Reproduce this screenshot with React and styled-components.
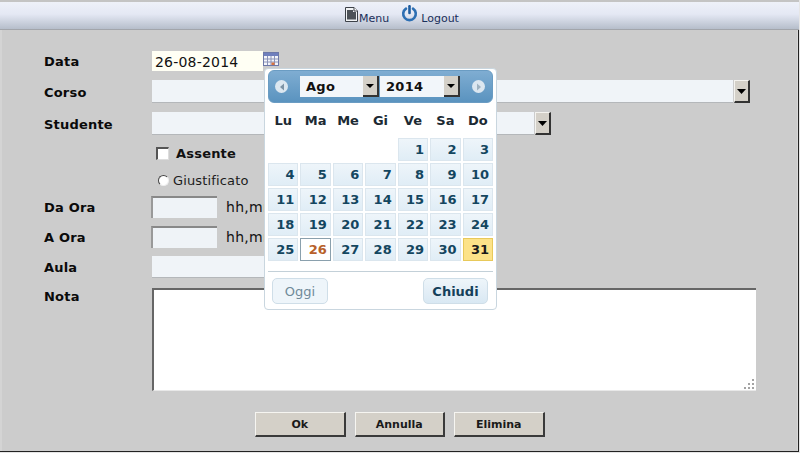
import React from 'react';
import styled, { createGlobalStyle } from 'styled-components';

const weekDays = ['Lu', 'Ma', 'Me', 'Gi', 'Ve', 'Sa', 'Do'];
const days = [null, null, null, null];
for (let i = 1; i <= 31; i++) days.push(i);

const App = () => {
  return (
    <Page>
      <GlobalStyle />
      <TopBar>
        <MenuLink>
          <DocIcon />
          <MenuText>Menu</MenuText>
        </MenuLink>
        <MenuLink $logout>
          <PowerIcon />
          <MenuText $logout>Logout</MenuText>
        </MenuLink>
      </TopBar>
      <Form>
        <Row $top={21} $h={20}>
          <Label>Data</Label>
          <DateInput defaultValue="26-08-2014" />
          <CalIcon />
        </Row>
        <Row $top={9} $h={23}>
          <Label>Corso</Label>
          <Input $w={581} />
          <SelectArrow />
        </Row>
        <Row $top={9} $h={23}>
          <Label>Studente</Label>
          <Input $w={382} />
          <SelectArrow />
        </Row>
        <Row $top={7} $h={23}>
          <Label />
          <Check />
          <CheckText>Assente</CheckText>
        </Row>
        <Row $top={5} $h={21}>
          <Label />
          <Radio />
          <RadioText>Giustificato</RadioText>
        </Row>
        <Row $top={5} $h={22}>
          <Label>Da Ora</Label>
          <TimeInput />
          <Hint>hh,mm</Hint>
        </Row>
        <Row $top={8} $h={22}>
          <Label>A Ora</Label>
          <TimeInput />
          <Hint>hh,mm</Hint>
        </Row>
        <Row $top={8} $h={22}>
          <Label>Aula</Label>
          <Input $w={200} />
        </Row>
        <NoteRow>
          <Label>Nota</Label>
          <NoteBox>
            <NoteArea />
            <Grip />
          </NoteBox>
        </NoteRow>
        <Buttons>
          <ActionButton>Ok</ActionButton>
          <ActionButton>Annulla</ActionButton>
          <ActionButton>Elimina</ActionButton>
        </Buttons>
      </Form>

      <Calendar>
        <CalHeader>
          <NavDot>
            <svg width="6" height="8" viewBox="0 0 6 8"><path d="M5 0.5 L1 4 L5 7.5 Z" fill="#7d93a5" /></svg>
          </NavDot>
          <HeaderSelects>
            <MonthSelect $w={79}>
              <span>Ago</span>
              <SmallArrow />
            </MonthSelect>
            <MonthSelect $w={80}>
              <span>2014</span>
              <SmallArrow />
            </MonthSelect>
          </HeaderSelects>
          <NavDot>
            <svg width="6" height="8" viewBox="0 0 6 8"><path d="M1 0.5 L5 4 L1 7.5 Z" fill="#9fb2c0" /></svg>
          </NavDot>
        </CalHeader>
        <WeekRow>
          {weekDays.map((d) => <WeekDay key={d}>{d}</WeekDay>)}
        </WeekRow>
        <DayGrid>
          {days.map((d, i) => (
            d === null
              ? <span key={i} />
              : <Day key={i} $today={d === 26} $active={d === 31}>{d}</Day>
          ))}
        </DayGrid>
        <CalFooter>
          <CalButton $disabled>Oggi</CalButton>
          <CalButton>Chiudi</CalButton>
        </CalFooter>
      </Calendar>
    </Page>
  );
};

export default App;

const DocIcon = () => (
  <svg width="13" height="15" viewBox="0 0 13 15">
    <path d="M0.5 0.5 H9 L12.5 4 V14.5 H0.5 Z" fill="#f1f3f5" stroke="#3c4148" />
    <path d="M2 3 H8 V5 H11 V12.5 H2 Z" fill="#4d5258" />
    <path d="M9 0.5 V4 H12.5" fill="#fff" stroke="#3c4148" />
  </svg>
);

const PowerIcon = () => (
  <svg width="17" height="18" viewBox="0 0 17 18">
    <path d="M5 3.6 A6.3 6.3 0 1 0 12 3.6" fill="none" stroke="#2d6fb3" strokeWidth="2.6" strokeLinecap="round" />
    <path d="M8.5 1.2 V8" fill="none" stroke="#1f5d9f" strokeWidth="2.6" strokeLinecap="round" />
  </svg>
);

const CalIcon = () => (
  <CalIconWrap width="16" height="16" viewBox="0 0 16 16">
    <rect x="0.5" y="1.5" width="15" height="13" fill="#f4f5fa" stroke="#6d78a8" />
    <rect x="1" y="2" width="14" height="3" fill="#6f7fbd" />
    <path d="M1 8 H15 M1 11 H15 M4.5 5 V14 M8 5 V14 M11.5 5 V14" stroke="#8a93b8" strokeWidth="1" />
    <rect x="8.5" y="11.5" width="3" height="2.5" fill="#d9733f" />
  </CalIconWrap>
);

const SelectArrow = () => (
  <ArrowBox>
    <svg width="9" height="5" viewBox="0 0 9 5"><path d="M0 0 H9 L4.5 5 Z" fill="#000" /></svg>
  </ArrowBox>
);

const SmallArrow = () => (
  <SmallArrowBox>
    <svg width="8" height="4" viewBox="0 0 8 4"><path d="M0 0 H8 L4 4 Z" fill="#000" /></svg>
  </SmallArrowBox>
);

const Grip = () => (
  <GripWrap width="12" height="12" viewBox="0 0 12 12">
    {[[9, 1], [5, 5], [9, 5], [1, 9], [5, 9], [9, 9]].map(([x, y]) => (
      <rect key={`${x}-${y}`} x={x} y={y} width="2" height="2" fill="#a3a3a3" />
    ))}
  </GripWrap>
);

const GlobalStyle = createGlobalStyle`
  html, body {
    margin: 0;
    padding: 0;
    background: #fff;
  }
  * {
    box-sizing: border-box;
  }
`;

const Page = styled.div`
  position: relative;
  width: 800px;
  height: 453px;
  overflow: hidden;
  background: #cccccc;
  font-family: "DejaVu Sans", Verdana, sans-serif;
  border-right: 1px solid #e6e6e6;
  border-bottom: 1px solid #e6e6e6;
  box-shadow: inset -1px -1px 0 #222, inset -2px 0 0 #d8d8d8, inset 2px 0 0 #d4d4d4;
`;

const TopBar = styled.div`
  height: 30px;
  display: flex;
  justify-content: center;
  align-items: flex-start;
  padding: 3px 0 0 0;
  border-top: 2px solid #c4c4c4;
  border-bottom: 1px solid #a2a5ab;
  background: linear-gradient(#eef1f9 0%, #e4e8f4 45%, #b6becb 100%);
`;

const MenuLink = styled.a`
  display: flex;
  align-items: flex-start;
  gap: ${(p) => (p.$logout ? '3px' : '1px')};
  margin-left: ${(p) => (p.$logout ? '12px' : '5px')};
  margin-top: ${(p) => (p.$logout ? '0' : '2px')};
  color: #1a2f5a;
  font-size: 11px;
  line-height: 13px;
`;

const MenuText = styled.span`
  margin-top: ${(p) => (p.$logout ? '7px' : '5px')};
`;

const Form = styled.form`
  display: flex;
  flex-direction: column;
  margin: 0;
  padding-left: 44px;
`;

const Row = styled.div`
  display: flex;
  align-items: center;
  margin-top: ${(p) => p.$top}px;
  height: ${(p) => p.$h}px;
`;

const Label = styled.label`
  width: 108px;
  flex-shrink: 0;
  padding-top: 1px;
  font-size: 13px;
  font-weight: 700;
  letter-spacing: 0.2px;
  color: #0a0a0a;
`;

const Input = styled.input`
  width: ${(p) => p.$w}px;
  height: 100%;
  margin: 0;
  padding: 0 0 0 2px;
  border: 0;
  border-bottom: 1px solid #b4b7ba;
  background: #f0f4f8;
  outline: none;
`;

const DateInput = styled.input`
  width: 111px;
  height: 100%;
  margin: 0;
  padding: 1px 0 0 3px;
  border: 0;
  background: #fffff4;
  font-family: "DejaVu Sans", Verdana, sans-serif;
  font-size: 14px;
  letter-spacing: 0.2px;
  color: #111;
  outline: none;
`;

const TimeInput = styled.input`
  width: 66px;
  height: 100%;
  margin-left: -1px;
  padding: 0;
  border: 0;
  border-top: 2px solid #888;
  border-left: 2px solid #999;
  background: #eff3f7;
  outline: none;
`;

const Hint = styled.span`
  margin-left: 9px;
  font-size: 14px;
  letter-spacing: 0.3px;
  color: #111;
`;

const CalIconWrap = styled.svg`
  margin-top: -4px;
`;

const ArrowBox = styled.div`
  width: 16px;
  height: 100%;
  margin-left: 1px;
  display: flex;
  align-items: center;
  justify-content: center;
  background: #d4d0c8;
  border-top: 1px solid #f4f3ef;
  border-left: 1px solid #f4f3ef;
  border-right: 2px solid #333;
  border-bottom: 2px solid #333;
`;

const Check = styled.span`
  width: 13px;
  height: 13px;
  margin: 0 0 0 4px;
  background: #fff;
  border-top: 2px solid #555;
  border-left: 2px solid #555;
  border-right: 1px solid #ddd;
  border-bottom: 1px solid #ddd;
`;

const CheckText = styled.span`
  margin-left: 7px;
  font-size: 13px;
  font-weight: 700;
  letter-spacing: 0.2px;
  color: #111;
`;

const Radio = styled.span`
  width: 11px;
  height: 11px;
  margin-left: 6px;
  border-radius: 50%;
  background: #fff;
  border: 1px solid;
  border-color: #444 #eee #eee #444;
`;

const RadioText = styled.span`
  margin-left: 4px;
  font-size: 13px;
  color: #1c1c1c;
  letter-spacing: 0.15px;
`;

const NoteRow = styled.div`
  display: flex;
  align-items: flex-start;
  margin-top: 10px;
`;

const NoteBox = styled.div`
  position: relative;
  width: 604px;
  height: 103px;
`;

const NoteArea = styled.textarea`
  display: block;
  width: 100%;
  height: 100%;
  margin: 0;
  padding: 2px;
  resize: none;
  background: #fff;
  border: 0;
  border-top: 2px solid #666;
  border-left: 2px solid #666;
  border-bottom: 1px solid #e8e8e8;
  outline: none;
`;

const GripWrap = styled.svg`
  position: absolute;
  right: 1px;
  bottom: 1px;
`;

const Buttons = styled.div`
  display: flex;
  gap: 9px;
  margin-top: 21px;
  padding-left: 211px;
`;

const ActionButton = styled.button`
  width: 90.5px;
  height: 25px;
  margin: 0;
  padding: 0;
  background: #d4d0c8;
  border: 0;
  border-top: 1px solid #f6f5f1;
  border-left: 1px solid #f6f5f1;
  border-right: 2px solid #3a3a3a;
  border-bottom: 2px solid #3a3a3a;
  font-family: "DejaVu Sans", Verdana, sans-serif;
  font-size: 11px;
  font-weight: 700;
  color: #1a1a1a;
`;

const Calendar = styled.div`
  position: absolute;
  left: 264px;
  top: 68px;
  width: 233px;
  height: 242px;
  padding: 1px 3px 0 3px;
  background: #fff;
  border: 1px solid #c9d6df;
  border-radius: 4px;
  display: flex;
  flex-direction: column;
`;

const CalHeader = styled.div`
  height: 33px;
  display: flex;
  align-items: center;
  justify-content: space-between;
  padding: 0 7px 0 6px;
  border-radius: 6px;
  background: linear-gradient(#7fadd2, #5a93bf);
  border: 1px solid #6a9cc3;
`;

const HeaderSelects = styled.div`
  display: flex;
  gap: 1px;
`;

const NavDot = styled.div`
  width: 13px;
  height: 13px;
  flex-shrink: 0;
  display: flex;
  align-items: center;
  justify-content: center;
  border-radius: 50%;
  background: #dce7f0;
`;

const MonthSelect = styled.div`
  width: ${(p) => p.$w}px;
  height: 21px;
  display: flex;
  align-items: center;
  justify-content: space-between;
  padding-left: 6px;
  background: #f2f6fa;
  font-size: 13px;
  font-weight: 700;
  letter-spacing: 0.3px;
  color: #111;
`;

const SmallArrowBox = styled.div`
  width: 16px;
  height: 100%;
  display: flex;
  align-items: center;
  justify-content: center;
  background: #d4d0c8;
  border-right: 2px solid #333;
  border-bottom: 2px solid #333;
`;

const WeekRow = styled.div`
  display: grid;
  grid-template-columns: repeat(7, 1fr);
  gap: 2px;
  height: 35px;
  align-items: center;
`;

const WeekDay = styled.div`
  text-align: center;
  font-size: 13px;
  font-weight: 700;
  color: #1c2a33;
`;

const DayGrid = styled.div`
  display: grid;
  grid-template-columns: repeat(7, 1fr);
  grid-auto-rows: 23px;
  gap: 2px;
`;

const Day = styled.div`
  display: flex;
  align-items: center;
  justify-content: flex-end;
  padding-right: 3px;
  font-size: 13px;
  font-weight: 700;
  color: ${(p) => (p.$today ? '#b8612a' : p.$active ? '#1a1a1a' : '#14465f')};
  background: ${(p) => {
    if (p.$active) return '#fce288';
    if (p.$today) return '#fff';
    return 'linear-gradient(#eef5fa, #e0edf6)';
  }};
  border: 1px solid ${(p) => {
    if (p.$active) return '#e8c95a';
    if (p.$today) return '#8aa0ad';
    return '#dbe6ee';
  }};
`;

const CalFooter = styled.div`
  display: flex;
  justify-content: space-between;
  align-items: center;
  margin-top: 10px;
  padding: 6px 5px 0 4px;
  border-top: 1px solid #c3d0d8;
`;

const CalButton = styled.button`
  width: ${(p) => (p.$disabled ? '56px' : '65px')};
  height: 26px;
  margin: 0;
  padding: 0;
  border: 1px solid #cfdee8;
  border-radius: 5px;
  background: ${(p) => (p.$disabled ? '#eef5fa' : 'linear-gradient(#eef5fa, #d9e8f3)')};
  font-family: "DejaVu Sans", Verdana, sans-serif;
  font-size: 13px;
  font-weight: ${(p) => (p.$disabled ? 400 : 700)};
  color: ${(p) => (p.$disabled ? '#6f8a99' : '#143f5a')};
`;
